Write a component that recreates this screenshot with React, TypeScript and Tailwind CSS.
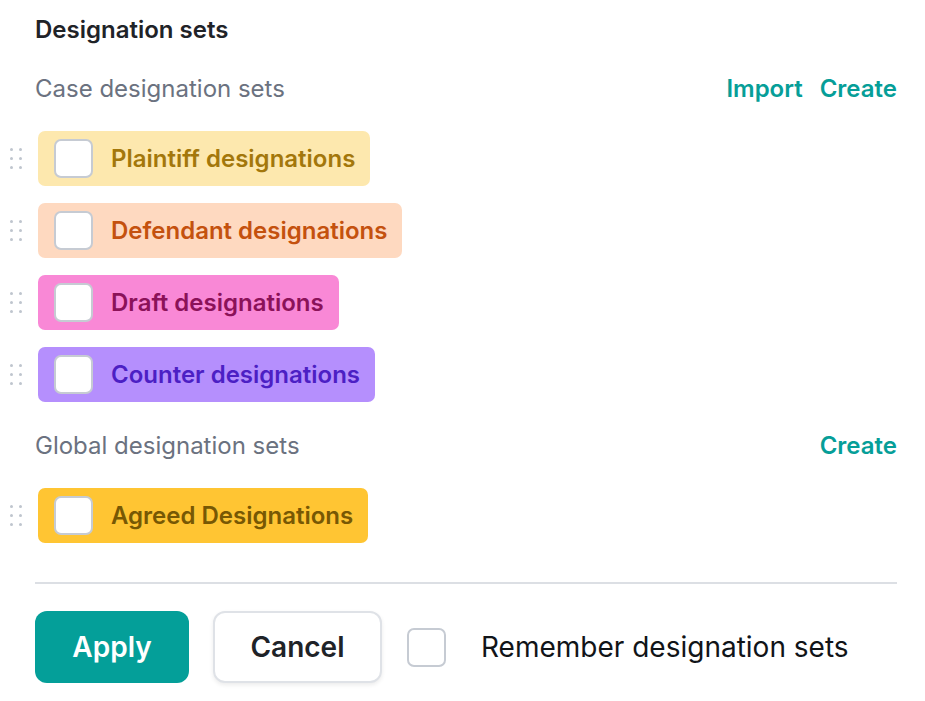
import React from "react";

type DesignationSet = {
  name: string;
  bg: string;
  text: string;
};

const caseSets: DesignationSet[] = [
  { name: "Plaintiff designations", bg: "bg-[#fde8ae]", text: "text-[#a3770b]" },
  { name: "Defendant designations", bg: "bg-[#fed9c0]", text: "text-[#c4510e]" },
  { name: "Draft designations", bg: "bg-[#f988d6]", text: "text-[#8b1259]" },
  { name: "Counter designations", bg: "bg-[#b58ffd]", text: "text-[#4c1fc4]" },
];

const globalSets: DesignationSet[] = [
  { name: "Agreed Designations", bg: "bg-[#ffc533]", text: "text-[#775804]" },
];

const DragHandle = () => (
  <div className="grid grid-cols-2 gap-x-[6px] gap-y-[6px] w-[12px]">
    {[0, 1, 2, 3, 4, 5].map((i) => (
      <span key={i} className="block w-[3px] h-[3px] rounded-full bg-[#bfc5ce]" />
    ))}
  </div>
);

const Checkbox = () => (
  <span className="block w-[39px] h-[39px] shrink-0 rounded-[7px] border-2 border-[#c6cbd3] bg-white" />
);

const SetRow = ({ item }: { item: DesignationSet }) => (
  <div className="flex items-center">
    <div className="w-[38px] flex justify-center pr-[6px]">
      <DragHandle />
    </div>
    <div
      className={`flex items-center h-[55px] rounded-[7px] pl-[16px] pr-[15px] gap-[18px] ${item.bg}`}
    >
      <Checkbox />
      <span className={`text-[24px] font-semibold ${item.text}`}>{item.name}</span>
    </div>
  </div>
);

const SectionHeader = ({ title, actions }: { title: string; actions: string[] }) => (
  <div className="flex items-center justify-between pl-[35px] pr-[28px] h-[30px]">
    <span className="text-[24px] text-[#6b7280]">{title}</span>
    <div className="flex gap-[17px]">
      {actions.map((a) => (
        <button key={a} className="text-[24px] font-semibold text-[#069e98]">
          {a}
        </button>
      ))}
    </div>
  </div>
);

const App = () => {
  return (
    <div
      className="w-[925px] h-[701px] bg-white"
      style={{ fontFamily: "Inter, 'Noto Sans', sans-serif" }}
    >
      <div className="pt-[14px]">
        <h2 className="pl-[35px] text-[24px] font-semibold text-[#1f2328] leading-[32px]">
          Designation sets
        </h2>

        <div className="mt-[28px]">
          <SectionHeader title="Case designation sets" actions={["Import", "Create"]} />
        </div>

        <div className="mt-[27px] flex flex-col gap-[17px]">
          {caseSets.map((s) => (
            <SetRow key={s.name} item={s} />
          ))}
        </div>

        <div className="mt-[29px]">
          <SectionHeader title="Global designation sets" actions={["Create"]} />
        </div>

        <div className="mt-[27px] flex flex-col gap-[17px]">
          {globalSets.map((s) => (
            <SetRow key={s.name} item={s} />
          ))}
        </div>

        <div className="ml-[35px] mr-[28px] mt-[39px] border-t-2 border-[#dcdfe4]" />

        <div className="flex items-center pl-[35px] mt-[27px]">
          <button className="w-[154px] h-[72px] rounded-[12px] bg-[#049f99] text-white text-[28px] font-semibold">
            Apply
          </button>
          <button className="ml-[24px] w-[169px] h-[72px] rounded-[12px] border-2 border-[#dfe2e7] bg-white text-[#1f2328] text-[28px] font-semibold shadow-[0_2px_4px_rgba(0,0,0,0.08)]">
            Cancel
          </button>
          <div className="ml-[25px]">
            <Checkbox />
          </div>
          <span className="ml-[35px] text-[28px] text-[#111418]">Remember designation sets</span>
        </div>
      </div>
    </div>
  );
};

export default App;
